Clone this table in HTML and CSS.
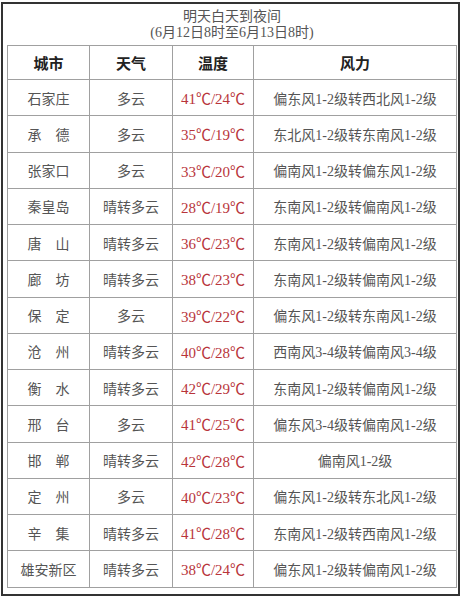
FILE: index.html
```html
<!DOCTYPE html>
<html lang="zh">
<head>
<meta charset="utf-8">
<link rel="stylesheet" href="styles.css">
</head>
<body>
<div class="frame">
  <div class="title">
    <div>明天白天到夜间</div>
    <div>(6月12日8时至6月13日8时)</div>
  </div>
  <table class="wx">
    <colgroup><col class="c1"><col class="c2"><col class="c3"><col class="c4"></colgroup>
    <thead>
      <tr><th>城市</th><th>天气</th><th>温度</th><th>风力</th></tr>
    </thead>
    <tbody>
      <tr><td>石家庄</td><td>多云</td><td class="t">41℃/24℃</td><td>偏东风1-2级转西北风1-2级</td></tr>
      <tr><td>承　德</td><td>多云</td><td class="t">35℃/19℃</td><td>东北风1-2级转东南风1-2级</td></tr>
      <tr><td>张家口</td><td>多云</td><td class="t">33℃/20℃</td><td>偏南风1-2级转偏东风1-2级</td></tr>
      <tr><td>秦皇岛</td><td>晴转多云</td><td class="t">28℃/19℃</td><td>东南风1-2级转偏南风1-2级</td></tr>
      <tr><td>唐　山</td><td>晴转多云</td><td class="t">36℃/23℃</td><td>东南风1-2级转偏南风1-2级</td></tr>
      <tr><td>廊　坊</td><td>晴转多云</td><td class="t">38℃/23℃</td><td>东南风1-2级转偏南风1-2级</td></tr>
      <tr><td>保　定</td><td>多云</td><td class="t">39℃/22℃</td><td>偏东风1-2级转东南风1-2级</td></tr>
      <tr><td>沧　州</td><td>晴转多云</td><td class="t">40℃/28℃</td><td>西南风3-4级转偏南风3-4级</td></tr>
      <tr><td>衡　水</td><td>晴转多云</td><td class="t">42℃/29℃</td><td>东南风1-2级转偏南风1-2级</td></tr>
      <tr><td>邢　台</td><td>多云</td><td class="t">41℃/25℃</td><td>偏东风3-4级转偏南风1-2级</td></tr>
      <tr><td>邯　郸</td><td>晴转多云</td><td class="t">42℃/28℃</td><td>偏南风1-2级</td></tr>
      <tr><td>定　州</td><td>多云</td><td class="t">40℃/23℃</td><td>偏东风1-2级转东北风1-2级</td></tr>
      <tr><td>辛　集</td><td>晴转多云</td><td class="t">41℃/28℃</td><td>东南风1-2级转西南风1-2级</td></tr>
      <tr><td>雄安新区</td><td>晴转多云</td><td class="t">38℃/24℃</td><td>偏东风1-2级转偏南风1-2级</td></tr>
    </tbody>
  </table>
</div>
</body>
</html>
```

FILE: styles.css
```css
html, body {
  margin: 0;
  padding: 0;
  background: #ffffff;
}
body {
  font-family: "Liberation Serif", "Noto Sans CJK SC", serif;
  color: #555;
}
.frame {
  box-sizing: border-box;
  margin: 2px 0 0 1px;
  width: 459px;
  height: 594px;
  border: 2px solid #333;
  padding: 0 1px 0 4px;
}
.title {
  height: 40px;
  display: flex;
  flex-direction: column;
  align-items: center;
  justify-content: center;
  font-size: 14px;
  line-height: 16px;
  color: #555;
  padding-top: 1px;
}
.wx {
  border-collapse: collapse;
  width: 449px;
  table-layout: fixed;
  border: 1px solid #9a9a9a;
}
.c1 { width: 82px; }
.c2 { width: 83px; }
.c3 { width: 81px; }
.c4 { width: 203px; }
.wx th, .wx td {
  border: 1px solid #a0a0a0;
  text-align: center;
  padding: 0;
  white-space: nowrap;
  font-size: 14px;
}
.wx th {
  height: 33px;
  font-weight: bold;
  color: #222;
  font-size: 15px;
}
.wx td {
  height: 35.25px;
}
.wx td.t {
  color: #b8343a;
  font-size: 15px;
}
```
